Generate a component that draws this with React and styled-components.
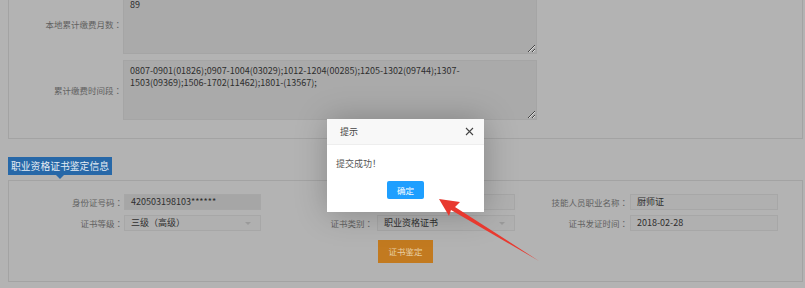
import React from 'react';
import styled, { createGlobalStyle } from 'styled-components';

const Global = createGlobalStyle`
  html, body {
    margin: 0;
    padding: 0;
    background: #b3b3b3;
  }
  body {
    font-family: "Noto Sans CJK SC", "Liberation Sans", sans-serif;
  }
`;

const Page = styled.div`
  position: relative;
  width: 805px;
  height: 288px;
  overflow: hidden;
  background: #b3b3b3;
`;

const Scroll = styled.div`
  margin-top: -20px;
  padding-left: 8px;
  padding-right: 2px;
`;

const TopPanel = styled.div`
  border: 1px solid #a3a3a3;
  padding: 13px 0 18px 0;
  display: flex;
  flex-direction: column;
  gap: 6px;
`;

const AreaRow = styled.div`
  display: grid;
  grid-template-columns: 114px 414px;
  align-items: center;
`;

const Label = styled.label`
  font-size: 8.5px;
  color: #616161;
  text-align: right;
  padding-right: ${p => p.$pad || 1}px;
  white-space: nowrap;
  line-height: 16px;
`;

// centred full-width colon, as the original font draws it
const Colon = styled.span`
  font-family: "Noto Sans CJK TC", "Noto Sans CJK SC", sans-serif;
`;

const TextArea = styled.textarea`
  box-sizing: border-box;
  height: 60px;
  width: 414px;
  margin: 0;
  padding: 4px 6px;
  background: #aaaaaa;
  border: 1px solid #a5a5a5;
  color: #2e2e2e;
  font-family: "Noto Sans CJK SC", "Liberation Sans", sans-serif;
  font-size: 9px;
  line-height: 12px;
  outline: none;
`;

const Section = styled.div`
  margin-top: 18px;
`;

const Tab = styled.div`
  position: relative;
  box-sizing: border-box;
  width: 104px;
  height: 18px;
  background: #2768a8;
  color: #e4ebf3;
  font-size: 9.8px;
  line-height: 18px;
  text-align: center;
  white-space: nowrap;

  &::after {
    content: '';
    position: absolute;
    left: 48px;
    bottom: -4px;
    border-left: 4px solid transparent;
    border-right: 4px solid transparent;
    border-top: 4px solid #2768a8;
  }
`;

const Panel = styled.div`
  margin-top: 5px;
  border: 1px solid #a3a3a3;
  padding: 13px 0 18px 0;
`;

const FormGrid = styled.div`
  display: grid;
  grid-template-columns: 115px 137px 116px 138px 115px 148px;
  grid-template-rows: 16px 16px auto;
  row-gap: 5px;
  align-items: center;
`;

const Field = styled.div`
  box-sizing: border-box;
  position: relative;
  height: 16px;
  padding: 0 6px;
  background: ${p => (p.$disabled ? '#a6a6a6' : '#b0b0b0')};
  border: 1px solid #a7a7a7;
  color: #2e2e2e;
  font-size: 9px;
  line-height: 14px;
  white-space: nowrap;
  overflow: hidden;

  ${p => p.$select && `
    &::after {
      content: '';
      position: absolute;
      right: 9px;
      top: 6px;
      border-left: 3px solid transparent;
      border-right: 3px solid transparent;
      border-top: 3px solid #9a9a9a;
    }
  `}
`;

const ButtonRow = styled.div`
  grid-column: 4;
  grid-row: 3;
  padding-top: 4px;
  align-self: start;
  margin-left: 1px;
`;

const OrangeButton = styled.div`
  width: 55px;
  height: 23px;
  background: #c27a20;
  color: #e8cfa5;
  font-size: 8.5px;
  line-height: 23px;
  text-align: center;
`;

const Dialog = styled.div`
  position: absolute;
  left: 327px;
  top: 119px;
  width: 157px;
  height: 93px;
  background: #fff;
  box-shadow: 1px 1px 30px rgba(0, 0, 0, 0.25);
  display: flex;
  flex-direction: column;
`;

const DialogHead = styled.div`
  height: 26px;
  box-sizing: border-box;
  padding: 0 10px 0 13px;
  background: #f8f8f8;
  border-bottom: 1px solid #eee;
  display: flex;
  align-items: center;
  justify-content: space-between;
  font-size: 9px;
  color: #444;
`;

const DialogBody = styled.div`
  padding: 13px 9px 0;
  font-size: 9px;
  line-height: 12px;
  color: #555;
`;

const DialogFoot = styled.div`
  display: flex;
  justify-content: center;
  margin-top: 11px;
`;

const BlueButton = styled.div`
  width: 37px;
  height: 18px;
  background: #1e9fff;
  border-radius: 2px;
  color: #fff;
  font-size: 8.5px;
  line-height: 18px;
  text-align: center;
`;

const Annotation = styled.svg`
  position: absolute;
  left: 0;
  top: 0;
  pointer-events: none;
`;

const CloseIcon = () => (
  <svg width="9" height="9" viewBox="0 0 9 9">
    <path d="M1 1 L8 8 M8 1 L1 8" stroke="#444" strokeWidth="1.1" fill="none" />
  </svg>
);

const payPeriods =
  '0807-0901(01826);0907-1004(03029);1012-1204(00285);1205-1302(09744);1307-\n1503(09369);1506-1702(11462);1801-(13567);';

const L = ({ children, pad }) => (
  <Label $pad={pad}>
    {children}
    <Colon>：</Colon>
  </Label>
);

export default function App() {
  return (
    <Page>
      <Global />
      <Scroll>
        <TopPanel>
          <AreaRow>
            <L>本地累计缴费月数</L>
            <TextArea defaultValue="89" />
          </AreaRow>
          <AreaRow>
            <L>累计缴费时间段</L>
            <TextArea defaultValue={payPeriods} />
          </AreaRow>
        </TopPanel>

        <Section>
          <Tab>职业资格证书鉴定信息</Tab>
          <Panel>
            <FormGrid>
              <L>身份证号码</L>
              <Field $disabled>420503198103******</Field>
              <L pad={4}>姓名</L>
              <Field>张三</Field>
              <L pad={2}>技能人员职业名称</L>
              <Field>厨师证</Field>

              <L>证书等级</L>
              <Field $select>三级（高级）</Field>
              <L pad={4}>证书类别</L>
              <Field $select>职业资格证书</Field>
              <L pad={2}>证书发证时间</L>
              <Field>2018-02-28</Field>

              <ButtonRow>
                <OrangeButton>证书鉴定</OrangeButton>
              </ButtonRow>
            </FormGrid>
          </Panel>
        </Section>
      </Scroll>

      <Dialog>
        <DialogHead>
          <span>提示</span>
          <CloseIcon />
        </DialogHead>
        <DialogBody>提交成功！</DialogBody>
        <DialogFoot>
          <BlueButton>确定</BlueButton>
        </DialogFoot>
      </Dialog>

      <Annotation width="805" height="288" viewBox="0 0 805 288">
        <polygon
          points="439,199 460,202 455,207 539,261 451,210 449,216"
          fill="#e8392f"
        />
      </Annotation>
    </Page>
  );
}
